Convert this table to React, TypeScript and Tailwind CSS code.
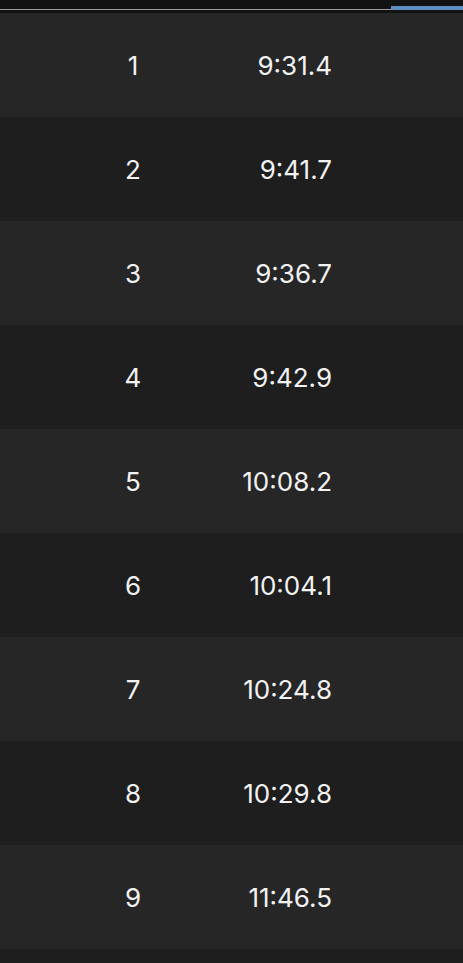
import React from "react";

const rows = [
  ["1", "9:31.4"],
  ["2", "9:41.7"],
  ["3", "9:36.7"],
  ["4", "9:42.9"],
  ["5", "10:08.2"],
  ["6", "10:04.1"],
  ["7", "10:24.8"],
  ["8", "10:29.8"],
  ["9", "11:46.5"],
];

export default function App() {
  return (
    <div className="w-[463px] h-[963px] overflow-hidden bg-[#1e1e1e]" style={{ fontFamily: 'Inter, "Liberation Sans", Arial, sans-serif' }}>
      <div className="relative h-[13px] bg-[#121212]">
        <div className="absolute left-0 top-[9px] w-[391px] h-px bg-[#9c9c9c]" />
        <div className="absolute left-[391px] right-0 top-[6px] h-[4px] bg-[#5d8fc2]" />
      </div>
      {rows.map(([n, t], i) => (
        <div
          key={n}
          className={`flex items-center h-[104px] pl-[83px] text-[26px] text-[#f2f2f2] ${i % 2 === 0 ? "bg-[#262626]" : "bg-[#1e1e1e]"}`}
        >
          <div className="w-[100px] text-center">{n}</div>
          <div className="w-[149px] text-right">{t}</div>
        </div>
      ))}
      <div className="h-[14px] bg-[#1e1e1e]" />
    </div>
  );
}
